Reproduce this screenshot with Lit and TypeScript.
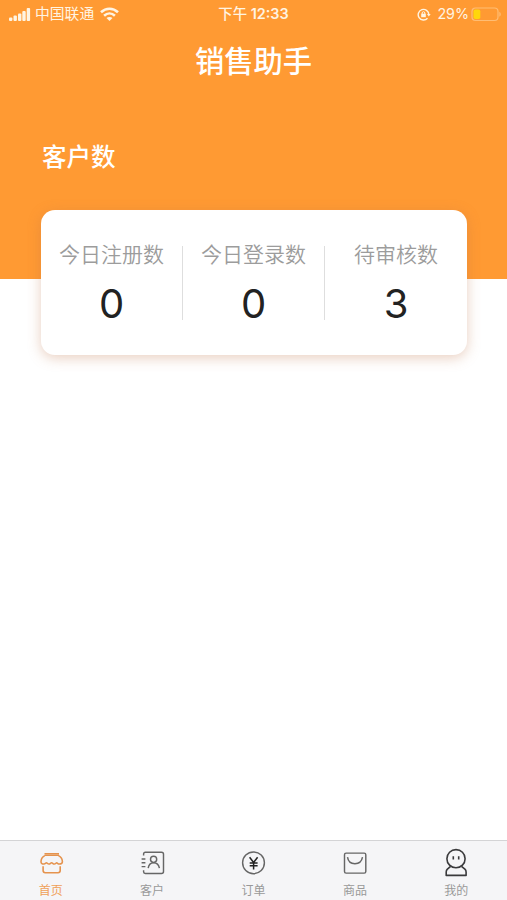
import { LitElement, html, css, svg } from "lit";
import { customElement } from "lit/decorators.js";
import { classMap } from "lit/directives/class-map.js";

const stats = [
  { label: "今日注册数", value: 0 },
  { label: "今日登录数", value: 0 },
  { label: "待审核数", value: 3 },
];

const tabs = [
  {
    label: "首页",
    icon: svg`<path d="M6.500 3.700H21M6.500 5.400H21" stroke-width="1.400"/>
      <path d="M6.800 5.600C4.400 6.800 3 9 3 11.800c0 1.600 1.400 2.400 3 2.200 1.300 0 1.900-1.200 2.500-1.200.7 0 1 1.200 2.400 1.200s1.700-1.200 2.700-1.200 1.300 1.200 2.700 1.200 1.700-1.200 2.400-1.200 1.200 1.200 2.500 1.200c1.800.1 3.200-.6 3.200-2.200 0-2.800-1.500-5-3.900-6.200"/>
      <path d="M5.100 16.300v4.300c0 1.400.8 2.200 2.200 2.200h12.700c1.400 0 2.200-.8 2.200-2.200v-4.300"/>`,
  },
  {
    label: "客户",
    icon: svg`<path d="M4.600 5.500V4c0-1 .7-1.700 1.700-1.700h16.200c1.300 0 2 .7 2 2v17.200c0 1.300-.7 2-2 2H6.300c-1 0-1.700-.7-1.700-1.700v-1.500M2.600 9h3.800M2.600 12.800h3.800M2.600 16.600h3.800"/>
      <circle cx="14.600" cy="9.300" r="3.100"/><path d="M9.200 18.200c.5-3.500 2.700-5.400 5.400-5.400s5.200 1.900 5.800 5.400"/>`,
  },
  {
    label: "订单",
    icon: svg`<circle cx="13.500" cy="12.800" r="10.900"/>
      <path d="M9.600 7.200l4 5.300 4-5.300M13.600 12.300v7.200M9.700 12.900h7.900M9.700 15.800h7.900" stroke="#222" stroke-width="1.500"/>`,
  },
  {
    label: "商品",
    icon: svg`<rect x="2.500" y="3.100" width="21.300" height="20" rx="1.600"/>
      <path d="M5.500 7.200c.6 4 3.600 6.500 7.400 6.500s6.900-2.500 7.600-6.500"/>`,
  },
  {
    label: "我的",
    icon: svg`<g stroke="#3a3a3c" stroke-width="1.600" stroke-linejoin="round"><circle cx="13" cy="8.700" r="9.100"/>
      <path d="M7.600 16.300L4.400 19.100Q3.200 20.300 3.200 21.900V25.400H23.100V21.900Q23.100 20.300 21.900 19.100L18.500 16.300M10.300 6.300v3.200M15.700 6.300v3.200"/></g>`,
  },
];

@customElement("app-root")
export class AppRoot extends LitElement {
  static styles = css`
    :host {
      display: flex;
      flex-direction: column;
      height: 900px;
      background: #fff;
      overflow: hidden;
      font-family: Inter, "Noto Sans CJK SC", sans-serif;
    }
    * { box-sizing: border-box; }
    .hero {
      height: 279px;
      flex: none;
      background: #ff9a33;
      color: #fff;
    }
    .status {
      display: grid;
      grid-template-columns: 1fr auto 1fr;
      align-items: center;
      height: 28px;
      font-size: 14.300px;
      line-height: 28px;
      color: #fff4e2;
    }
    .carrier, .power { display: flex; align-items: center; }
    .carrier { padding-left: 9px; font-size: 14.800px; }
    .carrier svg, .power svg { flex: none; }
    .signal { margin-right: 4px; }
    .wifi { margin-left: 6px; }
    .clock { font-weight: 600; font-size: 14.400px; }
    .ampm { font-weight: 500; }
    .power { justify-content: flex-end; padding-right: 5px; }
    .lock { margin-right: 6px; }
    .battery { margin-left: 2px; }
    h1 {
      margin: 12px 0 0;
      text-align: center;
      font-size: 29.300px;
      line-height: 44px;
      font-weight: 500;
    }
    h2 {
      margin: 55px 0 0 42px;
      font-size: 24.500px;
      line-height: 36px;
      font-weight: 500;
    }
    .card {
      flex: none;
      display: grid;
      grid-template-columns: repeat(3, 1fr);
      margin: -69px 40px 0 41px;
      height: 144.500px;
      padding-top: 36px;
      background: #fff;
      border-radius: 14px;
      box-shadow: 0 3px 13px rgba(190, 115, 70, 0.34);
    }
    .stat {
      height: 74px;
      text-align: center;
      border-right: 1px solid #dedede;
    }
    .stat:last-child { border-right: 0; }
    .label {
      font-size: 21px;
      line-height: 18px;
      font-weight: 350;
      color: #9c9c9c;
      white-space: nowrap;
    }
    .value {
      margin-top: 16px;
      font-size: 40px;
      line-height: 48px;
      font-weight: 370;
      color: #222;
    }
    .tabs {
      margin-top: auto;
      height: 60px;
      flex: none;
      display: grid;
      grid-template-columns: repeat(5, 1fr);
      background: #f5f5f7;
      border-top: 1px solid #d4d4d6;
    }
    .tab {
      display: flex;
      flex-direction: column;
      align-items: center;
      padding-top: 9px;
      color: #999;
      font-size: 12px;
      line-height: 16px;
    }
    .tab svg {
      overflow: visible;
      fill: none;
      stroke: #666;
      stroke-width: 1.450;
      margin-bottom: 7px;
    }
    .active { color: #f0a057; }
    .active svg { stroke: #e5934e; stroke-width: 1.600; }
  `;

  render() {
    return html`
      <header class="hero">
        <div class="status">
          <div class="carrier">
            <svg class="signal" width="22" height="13" viewBox="0 0 22 13" fill="currentColor">
              <rect x="0" y="9.500" width="3.400" height="3.500" rx="1"/><rect x="4.500" y="7.500" width="3.400" height="5.500" rx="1"/>
              <rect x="9" y="5.500" width="3.400" height="7.500" rx="1"/><rect x="13.300" y="3" width="3.400" height="10" rx="1"/>
              <rect x="17.700" y="0" width="3.400" height="13" rx="1"/>
            </svg>
            <span>中国联通</span>
            <svg class="wifi" width="19" height="14" viewBox="0 0 19 14" fill="none" stroke="currentColor" stroke-width="2.600">
              <path d="M1 5.200c5-4.700 12-4.700 17 0M4.100 8.700c3.200-3 7.600-3 10.800 0"/>
              <path d="M6.500 11c1.800-1.500 4.200-1.500 6 0l-3 3z" fill="currentColor" stroke="none"/>
            </svg>
          </div>
          <div class="clock"><span class="ampm">下午</span> 12:33</div>
          <div class="power">
            <svg class="lock" width="14" height="13" viewBox="0 0 14 13" fill="none" stroke="currentColor" stroke-width="1.400">
              <path d="M10.500 10.200A5.300 5.300 0 1 1 11.800 6.500"/><path d="M10 6h3.700l-1.900 2.600z" fill="currentColor" stroke="none"/>
              <rect x="4.200" y="5.700" width="4.600" height="3.500" fill="currentColor" stroke="none"/><path d="M5.200 6V5a1.300 1.300 0 0 1 2.600 0v1" stroke-width="1"/>
            </svg>
            <span>29%</span>
            <svg class="battery" width="31" height="15" viewBox="0 0 31 15">
              <rect x="1" y="1" width="26" height="12.500" rx="3.500" fill="none" stroke="#ffbd74" stroke-width="1.200"/>
              <rect x="2.500" y="2.500" width="6.800" height="9.500" rx="1.800" fill="#ffd60a"/>
              <path d="M28.300 4.800c2 1 2 4 0 5z" fill="#ffbd74"/>
            </svg>
          </div>
        </div>
        <h1>销售助手</h1>
        <h2>客户数</h2>
      </header>
      <section class="card">
        ${stats.map((s) => html`<div class="stat">
          <div class="label">${s.label}</div>
          <div class="value">${s.value}</div>
        </div>`)}
      </section>
      <nav class="tabs">
        ${tabs.map((t, i) => html`<div class=${classMap({ tab: true, active: i === 0 })}>
          <svg width="26" height="26" viewBox="0 0 26 26">${t.icon}</svg>
          <span>${t.label}</span>
        </div>`)}
      </nav>
    `;
  }
}
